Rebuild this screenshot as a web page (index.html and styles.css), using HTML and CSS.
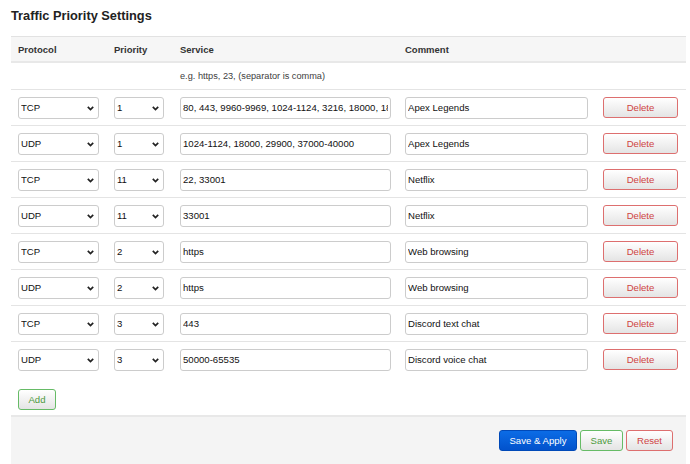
FILE: index.html
```html
<!DOCTYPE html>
<html lang="en">
<head>
<meta charset="utf-8">
<title>Traffic Priority Settings</title>
<link rel="stylesheet" href="styles.css">
</head>
<body>
<div class="page">
  <h2 class="title">Traffic Priority Settings</h2>
  <div class="table">
    <div class="row head">
      <div class="cell">Protocol</div>
      <div class="cell">Priority</div>
      <div class="cell">Service</div>
      <div class="cell">Comment</div>
      <div class="cell"></div>
    </div>
    <div class="row hint">
      <div class="cell"></div>
      <div class="cell"></div>
      <div class="cell hint-text">e.g. https, 23, (separator is comma)</div>
      <div class="cell"></div>
      <div class="cell"></div>
    </div>

    <div class="row">
      <div class="cell"><div class="sel sel-proto"><select><option>TCP</option><option>UDP</option></select><svg class="chev" width="7" height="5" viewBox="0 0 7 5"><path d="M0.8 0.9 L3.5 3.6 L6.2 0.9"/></svg></div></div>
      <div class="cell"><div class="sel sel-prio"><select><option>1</option></select><svg class="chev" width="7" height="5" viewBox="0 0 7 5"><path d="M0.8 0.9 L3.5 3.6 L6.2 0.9"/></svg></div></div>
      <div class="cell"><input class="inp inp-service" type="text" value="80, 443, 9960-9969, 1024-1124, 3216, 18000, 18060, 27000-27200"></div>
      <div class="cell"><input class="inp inp-comment" type="text" value="Apex Legends"></div>
      <div class="cell"><button class="btn btn-del">Delete</button></div>
    </div>

    <div class="row">
      <div class="cell"><div class="sel sel-proto"><select><option>UDP</option></select><svg class="chev" width="7" height="5" viewBox="0 0 7 5"><path d="M0.8 0.9 L3.5 3.6 L6.2 0.9"/></svg></div></div>
      <div class="cell"><div class="sel sel-prio"><select><option>1</option></select><svg class="chev" width="7" height="5" viewBox="0 0 7 5"><path d="M0.8 0.9 L3.5 3.6 L6.2 0.9"/></svg></div></div>
      <div class="cell"><input class="inp inp-service" type="text" value="1024-1124, 18000, 29900, 37000-40000"></div>
      <div class="cell"><input class="inp inp-comment" type="text" value="Apex Legends"></div>
      <div class="cell"><button class="btn btn-del">Delete</button></div>
    </div>

    <div class="row">
      <div class="cell"><div class="sel sel-proto"><select><option>TCP</option></select><svg class="chev" width="7" height="5" viewBox="0 0 7 5"><path d="M0.8 0.9 L3.5 3.6 L6.2 0.9"/></svg></div></div>
      <div class="cell"><div class="sel sel-prio"><select><option>11</option></select><svg class="chev" width="7" height="5" viewBox="0 0 7 5"><path d="M0.8 0.9 L3.5 3.6 L6.2 0.9"/></svg></div></div>
      <div class="cell"><input class="inp inp-service" type="text" value="22, 33001"></div>
      <div class="cell"><input class="inp inp-comment" type="text" value="Netflix"></div>
      <div class="cell"><button class="btn btn-del">Delete</button></div>
    </div>

    <div class="row">
      <div class="cell"><div class="sel sel-proto"><select><option>UDP</option></select><svg class="chev" width="7" height="5" viewBox="0 0 7 5"><path d="M0.8 0.9 L3.5 3.6 L6.2 0.9"/></svg></div></div>
      <div class="cell"><div class="sel sel-prio"><select><option>11</option></select><svg class="chev" width="7" height="5" viewBox="0 0 7 5"><path d="M0.8 0.9 L3.5 3.6 L6.2 0.9"/></svg></div></div>
      <div class="cell"><input class="inp inp-service" type="text" value="33001"></div>
      <div class="cell"><input class="inp inp-comment" type="text" value="Netflix"></div>
      <div class="cell"><button class="btn btn-del">Delete</button></div>
    </div>

    <div class="row">
      <div class="cell"><div class="sel sel-proto"><select><option>TCP</option></select><svg class="chev" width="7" height="5" viewBox="0 0 7 5"><path d="M0.8 0.9 L3.5 3.6 L6.2 0.9"/></svg></div></div>
      <div class="cell"><div class="sel sel-prio"><select><option>2</option></select><svg class="chev" width="7" height="5" viewBox="0 0 7 5"><path d="M0.8 0.9 L3.5 3.6 L6.2 0.9"/></svg></div></div>
      <div class="cell"><input class="inp inp-service" type="text" value="https"></div>
      <div class="cell"><input class="inp inp-comment" type="text" value="Web browsing"></div>
      <div class="cell"><button class="btn btn-del">Delete</button></div>
    </div>

    <div class="row">
      <div class="cell"><div class="sel sel-proto"><select><option>UDP</option></select><svg class="chev" width="7" height="5" viewBox="0 0 7 5"><path d="M0.8 0.9 L3.5 3.6 L6.2 0.9"/></svg></div></div>
      <div class="cell"><div class="sel sel-prio"><select><option>2</option></select><svg class="chev" width="7" height="5" viewBox="0 0 7 5"><path d="M0.8 0.9 L3.5 3.6 L6.2 0.9"/></svg></div></div>
      <div class="cell"><input class="inp inp-service" type="text" value="https"></div>
      <div class="cell"><input class="inp inp-comment" type="text" value="Web browsing"></div>
      <div class="cell"><button class="btn btn-del">Delete</button></div>
    </div>

    <div class="row">
      <div class="cell"><div class="sel sel-proto"><select><option>TCP</option></select><svg class="chev" width="7" height="5" viewBox="0 0 7 5"><path d="M0.8 0.9 L3.5 3.6 L6.2 0.9"/></svg></div></div>
      <div class="cell"><div class="sel sel-prio"><select><option>3</option></select><svg class="chev" width="7" height="5" viewBox="0 0 7 5"><path d="M0.8 0.9 L3.5 3.6 L6.2 0.9"/></svg></div></div>
      <div class="cell"><input class="inp inp-service" type="text" value="443"></div>
      <div class="cell"><input class="inp inp-comment" type="text" value="Discord text chat"></div>
      <div class="cell"><button class="btn btn-del">Delete</button></div>
    </div>

    <div class="row">
      <div class="cell"><div class="sel sel-proto"><select><option>UDP</option></select><svg class="chev" width="7" height="5" viewBox="0 0 7 5"><path d="M0.8 0.9 L3.5 3.6 L6.2 0.9"/></svg></div></div>
      <div class="cell"><div class="sel sel-prio"><select><option>3</option></select><svg class="chev" width="7" height="5" viewBox="0 0 7 5"><path d="M0.8 0.9 L3.5 3.6 L6.2 0.9"/></svg></div></div>
      <div class="cell"><input class="inp inp-service" type="text" value="50000-65535"></div>
      <div class="cell"><input class="inp inp-comment" type="text" value="Discord voice chat"></div>
      <div class="cell"><button class="btn btn-del">Delete</button></div>
    </div>
  </div>

  <div class="add-wrap"><button class="btn btn-add">Add</button></div>

  <div class="footer">
    <button class="btn btn-apply">Save &amp; Apply</button>
    <button class="btn btn-save">Save</button>
    <button class="btn btn-reset">Reset</button>
  </div>
</div>
</body>
</html>
```

FILE: styles.css
```css
* { box-sizing: border-box; }

html, body {
  margin: 0;
  background: #ffffff;
}

body {
  font-family: "Liberation Sans", Arial, sans-serif;
  color: #222222;
}

.page {
  padding-left: 11px;
  width: 690px;
}

.title {
  margin: 0;
  height: 36px;
  padding-top: 8px;
  font-size: 12.8px;
  line-height: 16px;
  font-weight: bold;
  color: #222222;
}

.table {
  width: 675px;
}

.row {
  display: grid;
  grid-template-columns: 96px 66px 225px 198px 90px;
  align-items: center;
  height: 36px;
  border-top: 1px solid #e4e4e4;
}

.cell {
  padding-left: 7px;
}

.head {
  height: 27px;
  background: #f6f6f6;
  border-top: 1px solid #e2e2e2;
  border-bottom: 2px solid #e8e8e8;
  font-size: 9.5px;
  font-weight: bold;
  color: #333333;
}

.hint {
  height: 26px;
  border-top: 0;
}

.hint-text {
  font-size: 9.2px;
  color: #404040;
  white-space: nowrap;
}

.sel {
  position: relative;
  height: 22px;
}

.sel select {
  appearance: none;
  -webkit-appearance: none;
  display: block;
  width: 100%;
  height: 22px;
  margin: 0;
  padding: 0 2px;
  border: 1px solid #cccccc;
  border-radius: 3px;
  background: #ffffff;
  font-family: "Liberation Sans", Arial, sans-serif;
  font-size: 9.6px;
  color: #111111;
}

.sel-proto { width: 81px; }
.sel-prio { width: 50px; }

.chev {
  position: absolute;
  right: 5px;
  top: 9px;
  fill: none;
  stroke: #222222;
  stroke-width: 1.7;
  pointer-events: none;
}

.inp {
  display: block;
  height: 22px;
  margin: 0;
  padding: 0 2px;
  border: 1px solid #cccccc;
  border-radius: 3px;
  background: #ffffff;
  font-family: "Liberation Sans", Arial, sans-serif;
  font-size: 9.6px;
  color: #111111;
}

.inp-service { width: 211px; }
.inp-comment { width: 183px; }

.btn {
  display: block;
  height: 21px;
  margin: 0;
  padding: 0;
  border-radius: 3px;
  font-family: "Liberation Sans", Arial, sans-serif;
  font-size: 9.6px;
  background: linear-gradient(#ffffff, #e4e4e4);
  cursor: pointer;
}

.btn-del {
  width: 75px;
  border: 1px solid #dd6f6f;
  color: #cf4444;
}

.add-wrap {
  padding: 12px 7px 5px;
}

.btn-add {
  width: 38px;
  border: 1px solid #66bb66;
  color: #4e9a40;
}

.footer {
  display: flex;
  justify-content: flex-end;
  gap: 3px;
  width: 675px;
  height: 60px;
  padding: 13px 13px 0 0;
  background: #f4f4f4;
  border-top: 2px solid #e8e8e8;
}

.btn-apply {
  width: 78px;
  border: 1px solid #0049b8;
  background: linear-gradient(#0b6ce6, #0252cc);
  color: #ffffff;
}

.btn-save {
  width: 43px;
  border: 1px solid #66bb66;
  color: #4e9a40;
}

.btn-reset {
  width: 47px;
  border: 1px solid #dd6f6f;
  color: #cf4444;
}
```
